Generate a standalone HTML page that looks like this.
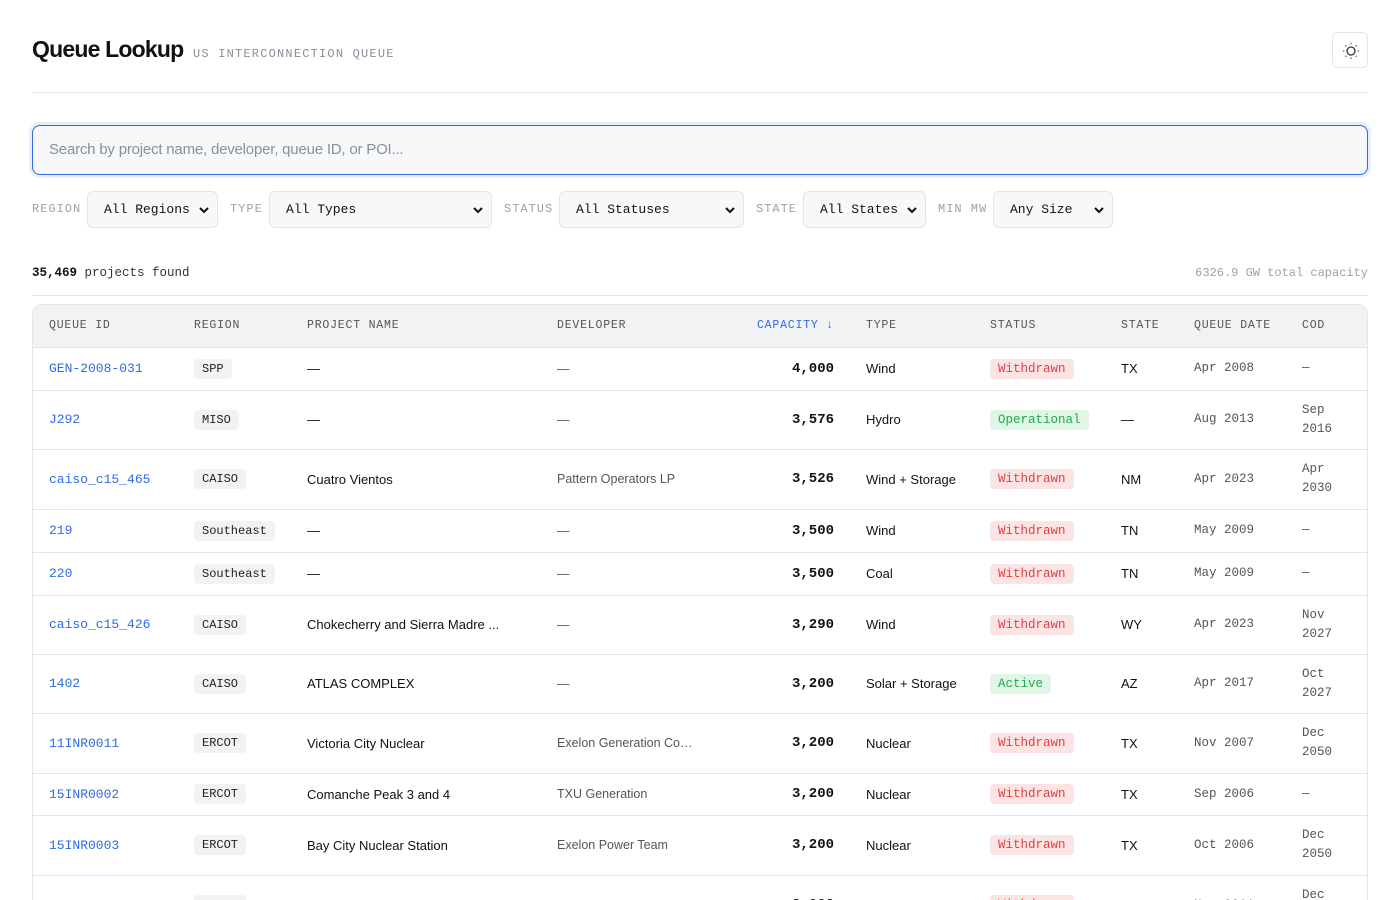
<!DOCTYPE html>
<html><head><meta charset="utf-8"><style>
*{box-sizing:border-box;margin:0;padding:0}
html,body{width:1400px;height:900px;overflow:hidden}
body{background:#fff;font-family:"Liberation Sans",sans-serif;color:#111;position:relative}
.mono{font-family:"Liberation Mono",monospace}
.abs{position:absolute}
h1{position:absolute;left:32px;top:36px;font-size:23px;font-weight:bold;letter-spacing:-0.8px;color:#111}
.sub{left:193px;top:47px;font-size:12px;color:#8a8f98;letter-spacing:1.2px}
.theme{left:1332px;top:32px;width:36px;height:36px;border:1px solid #e3e5e8;border-radius:6px}
.hr{left:32px;width:1336px;height:1px;background:#e3e5e8}
.search{left:32px;top:125px;width:1336px;height:50px;border:1px solid #2f6be6;border-radius:8px;background:#f7f8fa;box-shadow:0 0 0 3px #e6eefc;font-size:15px;color:#8a8f98;padding:15px 16px;letter-spacing:-0.2px}
.lbl{top:202px;font-size:12px;color:#9ca1a8;letter-spacing:1px}
.sel{top:191px;height:37px;border:1px solid #e3e5e8;border-radius:6px;background:#f7f8fa;font-size:13px;padding:10px 0 0 16px;color:#111}
.sel svg{position:absolute;right:8px;top:14px}
.cnt{left:32px;top:266px;font-size:12.5px;color:#333}
.tot{right:32px;top:266px;font-size:12px;color:#9ca1a8}
.tbl{left:32px;top:304px;width:1336px;border:1px solid #e3e5e8;border-radius:10px;overflow:hidden;height:596px;border-bottom:none;border-bottom-left-radius:0;border-bottom-right-radius:0}
table{border-collapse:collapse;table-layout:fixed;width:1334px}
th{background:#f1f2f4;height:42px;font-family:"Liberation Mono",monospace;font-weight:normal;font-size:11.5px;color:#555;letter-spacing:0.8px;text-align:left;padding-left:16px;border-bottom:1px solid #e3e5e8}
td{padding-left:16px;border-bottom:1px solid #e3e5e8;font-size:13px;vertical-align:middle}
td.id{font-family:"Liberation Mono",monospace;color:#2f6be6;font-size:13px}
.bd{display:inline-block;background:#f1f2f4;border-radius:4px;padding:3px 8px;font-family:"Liberation Mono",monospace;font-size:12px;color:#222}
td.cap{text-align:right;padding-right:16px;font-family:"Liberation Mono",monospace;font-weight:bold;font-size:14px}
td.dev{color:#555;font-size:12.5px;white-space:nowrap;overflow:hidden;text-overflow:ellipsis}
td.dt,td.cod{font-family:"Liberation Mono",monospace;color:#555;font-size:12.5px;line-height:19px}
.st{display:inline-block;border-radius:4px;padding:3px 8px;font-family:"Liberation Mono",monospace;font-size:12.5px}
.w{background:#fde4e4;color:#e53e3e}.g{background:#e0f5e6;color:#22a850}
</style></head><body>
<h1>Queue Lookup</h1>
<div class="abs sub mono">US INTERCONNECTION QUEUE</div>
<div class="abs theme"><svg width="36" height="36" viewBox="0 0 36 36"><circle cx="18" cy="18" r="4" fill="none" stroke="#333" stroke-width="1.3"/><g stroke="#555" stroke-width="1.3" stroke-linecap="round"><path d="M18 10.5v.3M18 25.2v.3M10.5 18h.3M25.2 18h.3M12.7 12.7l.2.2M23.1 23.1l.2.2M12.7 23.3l.2-.2M23.1 12.9l.2-.2"/></g></svg></div>
<div class="abs hr" style="top:92px"></div>
<div class="abs search">Search by project name, developer, queue ID, or POI...</div>

<div class="abs lbl mono" style="left:32px">REGION</div>
<div class="abs sel mono" style="left:87px;width:131px">All Regions<svg width="10" height="8"><path d="M1 2l4 4 4-4" stroke="#111" stroke-width="2" fill="none"/></svg></div>
<div class="abs lbl mono" style="left:230px">TYPE</div>
<div class="abs sel mono" style="left:269px;width:223px">All Types<svg width="10" height="8"><path d="M1 2l4 4 4-4" stroke="#111" stroke-width="2" fill="none"/></svg></div>
<div class="abs lbl mono" style="left:504px">STATUS</div>
<div class="abs sel mono" style="left:559px;width:185px">All Statuses<svg width="10" height="8"><path d="M1 2l4 4 4-4" stroke="#111" stroke-width="2" fill="none"/></svg></div>
<div class="abs lbl mono" style="left:756px">STATE</div>
<div class="abs sel mono" style="left:803px;width:123px">All States<svg width="10" height="8"><path d="M1 2l4 4 4-4" stroke="#111" stroke-width="2" fill="none"/></svg></div>
<div class="abs lbl mono" style="left:938px">MIN MW</div>
<div class="abs sel mono" style="left:993px;width:120px">Any Size<svg width="10" height="8"><path d="M1 2l4 4 4-4" stroke="#111" stroke-width="2" fill="none"/></svg></div>

<div class="abs cnt mono"><b style="color:#111">35,469</b> projects found</div>
<div class="abs tot mono">6326.9 GW total capacity</div>
<div class="abs hr" style="top:295px"></div>

<div class="abs tbl"><table>
<colgroup><col style="width:145px"><col style="width:113px"><col style="width:250px"><col style="width:159px"><col style="width:150px"><col style="width:124px"><col style="width:131px"><col style="width:73px"><col style="width:108px"><col style="width:81px"></colgroup>
<tr><th>QUEUE ID</th><th>REGION</th><th>PROJECT NAME</th><th>DEVELOPER</th><th style="text-align:right;padding-right:16px;color:#2f6be6">CAPACITY ↓</th><th>TYPE</th><th>STATUS</th><th>STATE</th><th>QUEUE DATE</th><th>COD</th></tr>
<tr style="height:43px"><td class="id">GEN-2008-031</td><td><span class="bd">SPP</span></td><td>—</td><td class="dev">—</td><td class="cap">4,000</td><td>Wind</td><td><span class="st w">Withdrawn</span></td><td>TX</td><td class="dt">Apr 2008</td><td class="cod">—</td></tr>
<tr style="height:59px"><td class="id">J292</td><td><span class="bd">MISO</span></td><td>—</td><td class="dev">—</td><td class="cap">3,576</td><td>Hydro</td><td><span class="st g">Operational</span></td><td>—</td><td class="dt">Aug 2013</td><td class="cod">Sep<br>2016</td></tr>
<tr style="height:60px"><td class="id">caiso_c15_465</td><td><span class="bd">CAISO</span></td><td>Cuatro Vientos</td><td class="dev">Pattern Operators LP</td><td class="cap">3,526</td><td>Wind + Storage</td><td><span class="st w">Withdrawn</span></td><td>NM</td><td class="dt">Apr 2023</td><td class="cod">Apr<br>2030</td></tr>
<tr style="height:43px"><td class="id">219</td><td><span class="bd">Southeast</span></td><td>—</td><td class="dev">—</td><td class="cap">3,500</td><td>Wind</td><td><span class="st w">Withdrawn</span></td><td>TN</td><td class="dt">May 2009</td><td class="cod">—</td></tr>
<tr style="height:43px"><td class="id">220</td><td><span class="bd">Southeast</span></td><td>—</td><td class="dev">—</td><td class="cap">3,500</td><td>Coal</td><td><span class="st w">Withdrawn</span></td><td>TN</td><td class="dt">May 2009</td><td class="cod">—</td></tr>
<tr style="height:59px"><td class="id">caiso_c15_426</td><td><span class="bd">CAISO</span></td><td>Chokecherry and Sierra Madre ...</td><td class="dev">—</td><td class="cap">3,290</td><td>Wind</td><td><span class="st w">Withdrawn</span></td><td>WY</td><td class="dt">Apr 2023</td><td class="cod">Nov<br>2027</td></tr>
<tr style="height:59px"><td class="id">1402</td><td><span class="bd">CAISO</span></td><td>ATLAS COMPLEX</td><td class="dev">—</td><td class="cap">3,200</td><td>Solar + Storage</td><td><span class="st g">Active</span></td><td>AZ</td><td class="dt">Apr 2017</td><td class="cod">Oct<br>2027</td></tr>
<tr style="height:60px"><td class="id">11INR0011</td><td><span class="bd">ERCOT</span></td><td>Victoria City Nuclear</td><td class="dev">Exelon Generation Company</td><td class="cap">3,200</td><td>Nuclear</td><td><span class="st w">Withdrawn</span></td><td>TX</td><td class="dt">Nov 2007</td><td class="cod">Dec<br>2050</td></tr>
<tr style="height:42px"><td class="id">15INR0002</td><td><span class="bd">ERCOT</span></td><td>Comanche Peak 3 and 4</td><td class="dev">TXU Generation</td><td class="cap">3,200</td><td>Nuclear</td><td><span class="st w">Withdrawn</span></td><td>TX</td><td class="dt">Sep 2006</td><td class="cod">—</td></tr>
<tr style="height:60px"><td class="id">15INR0003</td><td><span class="bd">ERCOT</span></td><td>Bay City Nuclear Station</td><td class="dev">Exelon Power Team</td><td class="cap">3,200</td><td>Nuclear</td><td><span class="st w">Withdrawn</span></td><td>TX</td><td class="dt">Oct 2006</td><td class="cod">Dec<br>2050</td></tr>
<tr style="height:60px"><td class="id">741</td><td><span class="bd">CAISO</span></td><td>PATHFINDER RENEWABLE WIN...</td><td class="dev">—</td><td class="cap">3,000</td><td>Wind</td><td><span class="st w">Withdrawn</span></td><td>WY</td><td class="dt">Nov 2011</td><td class="cod">Dec<br>2025</td></tr>
</table></div>
</body></html>
